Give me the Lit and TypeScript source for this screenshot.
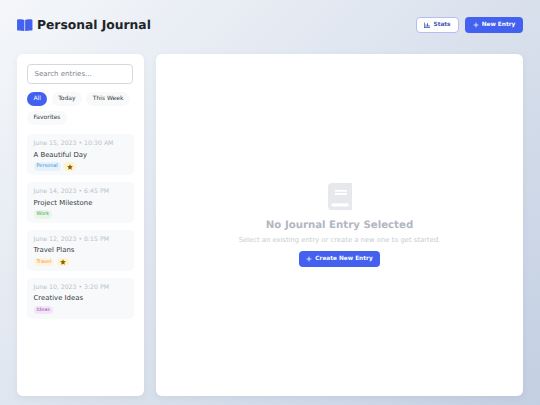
import { LitElement, html, css } from "lit";
import { customElement } from "lit/decorators.js";

const entries = [
  { date: "June 15, 2023 • 10:30 AM", title: "A Beautiful Day", tag: "Personal", cls: "personal", star: true },
  { date: "June 14, 2023 • 6:45 PM", title: "Project Milestone", tag: "Work", cls: "work", star: false },
  { date: "June 12, 2023 • 8:15 PM", title: "Travel Plans", tag: "Travel", cls: "travel", star: true },
  { date: "June 10, 2023 • 3:20 PM", title: "Creative Ideas", tag: "Ideas", cls: "ideas", star: false },
];

const plus = html`<svg class="plus" viewBox="0 0 10 10" aria-hidden="true"><path d="M5 1v8M1 5h8" stroke="currentColor" stroke-width="1.3" fill="none"/></svg>`;

@customElement("app-root")
export class AppRoot extends LitElement {
  static styles = css`
    :host {
      display: flex;
      flex-direction: column;
      box-sizing: border-box;
      width: 540px;
      height: 405px;
      padding: 17px 17px 9px;
      gap: 21px;
      overflow: hidden;
      font-family: "DejaVu Sans", sans-serif;
      text-rendering: geometricPrecision;
      color: #212529;
      background: linear-gradient(135deg, #f5f7fa 0%, #c3cfe2 100%);
    }
    * { box-sizing: border-box; }
    header { display: flex; align-items: center; justify-content: space-between; height: 16px; flex: none; }
    .brand { display: flex; align-items: center; gap: 4.5px; }
    .brand svg { width: 15.5px; height: 12.5px; display: block; }
    h1 { margin: 1px 0 0; font-size: 12.3px; line-height: 17px; font-weight: 700; color: #212529; }
    .actions { display: flex; gap: 6px; }
    button { font-family: inherit; font-weight: 600; border-radius: 4px; cursor: pointer; display: flex; align-items: center; justify-content: center; text-rendering: geometricPrecision; }
    .stats { width: 43px; height: 16px; gap: 3px; font-size: 5.8px; background: #fff; color: #4356b4; border: 1px solid #b4bef3; padding: 0; }
    .primary { background: #4361ee; color: #fff; border: none; padding: 0; gap: 3px; font-size: 5.8px; }
    .new { width: 58px; height: 16px; }
    .plus { width: 6px; height: 6px; display: block; }
    .stats svg { width: 6px; height: 6px; display: block; }
    .columns { flex: 1; display: grid; grid-template-columns: 127px 1fr; gap: 12px; min-height: 0; }
    .card { background: #fff; border-radius: 6px; box-shadow: 0 2px 8px rgba(0,0,0,.05); }
    aside { padding: 10px; display: flex; flex-direction: column; }
    .search { width: 106px; height: 20px; border: 1px solid #d5d9de; border-radius: 4px; display: flex; align-items: center; padding: 0 6.5px; font-size: 7px; color: #7d858d; background: #fff; }
    .filters { display: flex; flex-wrap: wrap; gap: 4.5px; margin-top: 8px; }
    .chip { height: 14px; padding: 0 6.4px; border-radius: 7px; background: #f8f9fa; font-size: 6px; line-height: 14px; color: #343a40; white-space: nowrap; }
    .chip.on { background: #4361ee; color: #fff; }
    .list { margin-top: 9.8px; display: flex; flex-direction: column; gap: 6.8px; }
    .entry { height: 41px; background: #f8f9fa; border-radius: 5px; padding: 6px 6.5px 0; }
    .date { font-size: 6.2px; line-height: 8px; color: #bcc1c8; white-space: nowrap; }
    .title { font-size: 6.9px; line-height: 9px; margin-top: 2.5px; color: #343a40; white-space: nowrap; }
    .tags { display: flex; gap: 2.7px; margin-top: 2.5px; }
    .tag { height: 8.5px; padding: 0 3px; border-radius: 4.25px; font-size: 5px; line-height: 8.5px; }
    .personal { background: #e3f2fd; color: #4a90c8; }
    .work { background: #e8f5e9; color: #5ba160; }
    .travel { background: #fff3e0; color: #f09a40; }
    .ideas { background: #f3e5f5; color: #9350b5; }
    .star { background: #fff3cd; color: #856404; width: 12.3px; padding: 0; display: flex; align-items: center; justify-content: center; }
    .star svg { width: 6px; height: 6px; display: block; }
    main { display: flex; flex-direction: column; align-items: center; justify-content: center; }
    .book { width: 24px; height: 27px; display: block; }
    h2 { margin: 8.5px 0 0; font-size: 10.2px; line-height: 14px; font-weight: 700; color: #b2b7bf; }
    p { margin: 3.5px 0 0; font-size: 6.8px; line-height: 9px; color: #c6ccd3; }
    .create { width: 81px; height: 16px; margin-top: 6px; }
  `;

  render() {
    return html`
      <header>
        <div class="brand">
          <svg viewBox="0 0 16 13" aria-hidden="true"><path fill="#4361ee" d="M7.6 1v11.800C6 12 3.400 11.700.6 11.900a.5.5 0 0 1-.6-.5V1C0 .6.2.4.6.4 3 .1 6 .2 7.600 1zM8.400 1C10 .2 13 .1 15.400.4c.4 0 .6.2.6.6v10.400a.5.5 0 0 1-.6.5c-2.800-.2-5.400.1-7 .9z"/></svg>
          <h1>Personal Journal</h1>
        </div>
        <div class="actions">
          <button class="stats"><svg viewBox="0 0 10 10" aria-hidden="true"><path fill="currentColor" d="M0 1h1.200v7.800H10V10H0zM2.500 4h1.500v3.800H2.500zM5 2h1.500v5.800H5zM7.500 5H9v2.800H7.500z"/></svg>Stats</button>
          <button class="primary new">${plus}New Entry</button>
        </div>
      </header>
      <div class="columns">
        <aside class="card">
          <div class="search">Search entries...</div>
          <div class="filters">
            <span class="chip on">All</span><span class="chip">Today</span><span class="chip">This Week</span><span class="chip">Favorites</span>
          </div>
          <div class="list">
            ${entries.map(e => html`
              <div class="entry">
                <div class="date">${e.date}</div>
                <div class="title">${e.title}</div>
                <div class="tags">
                  <span class="tag ${e.cls}">${e.tag}</span>
                  ${e.star ? html`<span class="tag star"><svg viewBox="0 0 24 24" aria-hidden="true"><path fill="currentColor" d="M12 1l3.400 7.400 8 .9-6 5.400 1.700 7.900L12 18.600l-7.100 4 1.700-7.900-6-5.400 8-.9z"/></svg></span>` : ""}
                </div>
              </div>`)}
          </div>
        </aside>
        <main class="card">
          <svg class="book" viewBox="0 0 24 27" aria-hidden="true">
            <path fill="#e6e8ec" fill-rule="evenodd" d="M4 0h20v27H4a4 4 0 0 1-4-4V4a4 4 0 0 1 4-4zM7 7v1.700h12V7zM7 10v2h12v-2zM5 20.300a1.600 1.600 0 0 0 0 3.200h15.500v-3.200z"/>
          </svg>
          <h2>No Journal Entry Selected</h2>
          <p>Select an existing entry or create a new one to get started.</p>
          <button class="primary create">${plus}Create New Entry</button>
        </main>
      </div>
    `;
  }
}
